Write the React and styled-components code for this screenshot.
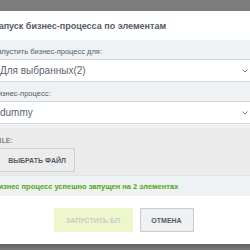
import React from 'react';
import styled, { createGlobalStyle } from 'styled-components';

const GlobalStyle = createGlobalStyle`
  html, body {
    margin: 0;
    padding: 0;
    background: #7d7d7d;
    overflow: hidden;
  }
  body {
    font-family: "Liberation Sans", Arial, sans-serif;
  }
`;

const Overlay = styled.div`
  width: 250px;
  height: 250px;
  padding-top: 11px;
  box-sizing: border-box;
  overflow: hidden;
  background: #7d7d7d;
`;

const Dialog = styled.div`
  width: 264px;
  margin-left: -9px;
  background: #fff;
  box-shadow: 0 3px 6px rgba(0, 0, 0, 0.25);
`;

const Header = styled.div`
  height: 29px;
  display: flex;
  align-items: center;
  padding-left: 2px;
  font-size: 9px;
  font-weight: bold;
  color: #535c69;
`;

const Body = styled.div`
  background: #eef2f4;
`;

const FieldLabel = styled.div`
  padding: 8px 2px 3px;
  font-size: 7.5px;
  line-height: 8px;
  color: #535c69;
`;

const Select = styled.div`
  height: 21px;
  display: flex;
  align-items: center;
  justify-content: space-between;
  padding: 0 5px 0 9px;
  background: #fff;
  border-top: 1px solid #d5d9de;
  border-bottom: 1px solid #d5d9de;
  font-size: 10px;
  color: #5d6570;
`;

const Chevron = styled.svg`
  width: 6px;
  height: 4px;
  margin-right: 2px;
`;

const Spacer = styled.div`
  height: 4px;
`;

const FileSection = styled.div`
  background: #ebebeb;
  padding: 9px 2px 3px 4px;
  border-bottom: 1px solid #e1e3e5;
`;

const FileLabel = styled.div`
  font-size: 7.5px;
  line-height: 8px;
  color: #535c69;
  margin-bottom: 3px;
`;

const Button = styled.button`
  height: 24px;
  padding: 0 ${(p) => p.$pad || 10}px;
  border: 1px solid ${(p) => p.$border || '#c6cdd3'};
  background: ${(p) => p.$bg || '#eef2f4'};
  color: ${(p) => p.$color || '#535c69'};
  font-family: "Liberation Sans", Arial, sans-serif;
  font-size: 7px;
  font-weight: bold;
  text-transform: uppercase;
  box-sizing: border-box;
  cursor: pointer;
`;

const FileButton = styled(Button)`
  margin-left: -4px;
  width: 84px;
  padding: 0 0 0 8px;
`;

const Notice = styled.div`
  height: 20px;
  display: flex;
  align-items: center;
  padding-left: 2px;
  font-size: 7.5px;
  font-weight: bold;
  color: #55a50f;
`;

const Footer = styled.div`
  height: 48px;
  display: flex;
  align-items: center;
  justify-content: center;
  gap: 7px;
  padding-left: 1px;
`;

export default function App() {
  return (
    <>
      <GlobalStyle />
      <Overlay>
        <Dialog>
          <Header>Запуск бизнес-процесса по элементам</Header>
          <Body>
            <FieldLabel>Запустить бизнес-процесс для:</FieldLabel>
            <Select>
              <span>Для выбранных(2)</span>
              <Chevron viewBox="0 0 6 4">
                <path d="M0.5 0.5 L3 3 L5.5 0.5" fill="none" stroke="#7a818a" strokeWidth="1" />
              </Chevron>
            </Select>
            <FieldLabel>Бизнес-процесс:</FieldLabel>
            <Select>
              <span>dummy</span>
              <Chevron viewBox="0 0 6 4">
                <path d="M0.5 0.5 L3 3 L5.5 0.5" fill="none" stroke="#7a818a" strokeWidth="1" />
              </Chevron>
            </Select>
            <Spacer />
            <FileSection>
              <FileLabel>FILE:</FileLabel>
              <FileButton $bg="#ececec" $border="#cfd1d3">Выбрать файл</FileButton>
            </FileSection>
            <Notice>Бизнес процесс успешно запущен на 2 элементах</Notice>
          </Body>
          <Footer>
            <Button $bg="#eef6cb" $border="#eef6cb" $color="#c9ccc6" style={{ width: 79 }}>
              Запустить БП
            </Button>
            <Button $bg="#eef0f2" $border="#c6cdd3" style={{ width: 54 }}>
              Отмена
            </Button>
          </Footer>
        </Dialog>
      </Overlay>
    </>
  );
}
